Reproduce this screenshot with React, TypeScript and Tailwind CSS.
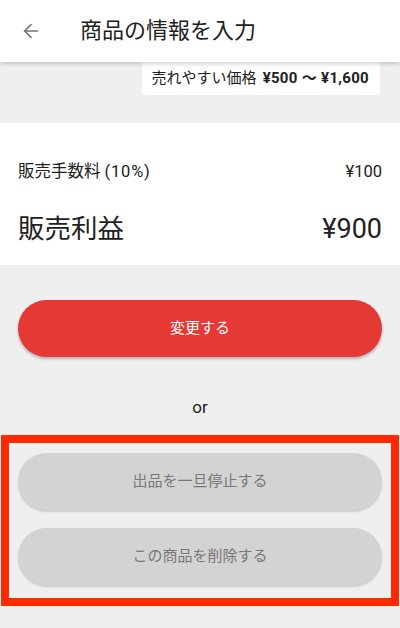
import { ArrowLeft } from "lucide-react"

const font = { fontFamily: '"Roboto", "Noto Sans CJK JP", sans-serif' }

export default function App() {
  return (
    <div className="w-[400px] h-[628px] bg-[#efefef] overflow-hidden text-[#212121]" style={font}>
      <header className="relative z-10 h-[62px] bg-white flex items-center shadow-[0_2px_4px_rgba(0,0,0,0.18)]">
        <ArrowLeft className="ml-[20px] w-[22px] h-[22px] text-[#757575]" strokeWidth={1.8} />
        <h1 className="ml-[38px] text-[22px] leading-none">商品の情報を入力</h1>
      </header>

      <div className="flex justify-end pr-[20px]">
        <div className="h-[33px] pl-[10px] pr-[11px] bg-white flex items-center text-[15px] rounded-b-sm">
          <span>売れやすい価格</span>
          <span className="ml-[6px] font-bold tracking-[0.3px]">¥500 〜 ¥1,600</span>
        </div>
      </div>

      <section className="mt-[28px] h-[142px] bg-white px-[18px] pt-[37px]">
        <div className="flex justify-between items-center h-[24px] text-[16.5px]">
          <span>
            販売手数料 <span className="tracking-[0.8px]">(10%)</span>
          </span>
          <span>¥100</span>
        </div>
        <div className="mt-[28px] flex justify-between items-center h-[34px]">
          <span className="text-[26.5px]">販売利益</span>
          <span className="text-[27px]">¥900</span>
        </div>
      </section>

      <div className="px-[18px] pt-[35px]">
        <button className="w-full h-[57px] rounded-full bg-[#e53935] text-white text-[15px] shadow-[0_2px_3px_rgba(0,0,0,0.25)]">
          変更する
        </button>
      </div>

      <p className="mt-[38px] text-center text-[17px] leading-[24px] text-[#212121]">or</p>

      <div className="mt-[16px] ml-[1px] w-[398px] h-[171px] border-[8px] border-[#ff2a00] flex flex-col gap-[18px] pt-[10px] px-[9px]">
        <button className="w-full h-[57px] rounded-full bg-[#d3d3d3] text-[#777777] text-[15px] shadow-[0_2px_2px_rgba(0,0,0,0.15)]">
          出品を一旦停止する
        </button>
        <button className="w-full h-[57px] rounded-full bg-[#d3d3d3] text-[#777777] text-[15px] shadow-[0_2px_2px_rgba(0,0,0,0.15)]">
          この商品を削除する
        </button>
      </div>
    </div>
  )
}
